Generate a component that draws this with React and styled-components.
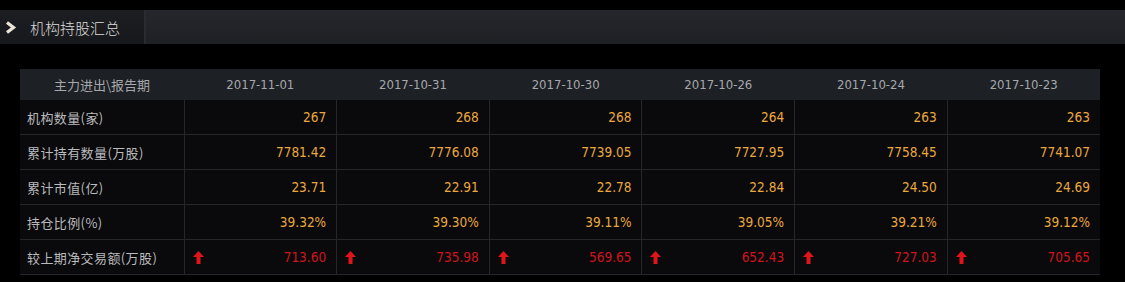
import React from "react";
import styled, { createGlobalStyle } from "styled-components";

const Global = createGlobalStyle`
  html, body {
    margin: 0;
    padding: 0;
    background: #000;
  }
  body {
    width: 1125px;
    height: 282px;
    overflow: hidden;
    font-family: "Noto Sans CJK SC", sans-serif;
  }
`;

const dates = ["2017-11-01", "2017-10-31", "2017-10-30", "2017-10-26", "2017-10-24", "2017-10-23"];

const rows = [
  { label: "机构数量(家)", values: ["267", "268", "268", "264", "263", "263"] },
  { label: "累计持有数量(万股)", values: ["7781.42", "7776.08", "7739.05", "7727.95", "7758.45", "7741.07"] },
  { label: "累计市值(亿)", values: ["23.71", "22.91", "22.78", "22.84", "24.50", "24.69"] },
  { label: "持仓比例(%)", values: ["39.32%", "39.30%", "39.11%", "39.05%", "39.21%", "39.12%"] },
  { label: "较上期净交易额(万股)", values: ["713.60", "735.98", "569.65", "652.43", "727.03", "705.65"], up: true },
];

const Page = styled.div`
  padding-top: 10px;
`;

const TitleBar = styled.div`
  display: flex;
  height: 34px;
  background: linear-gradient(to bottom, #232429, #1c1d21);
`;

const Tab = styled.div`
  display: flex;
  align-items: center;
  gap: 13px;
  width: 146px;
  padding-left: 5px;
  box-sizing: border-box;
  background: linear-gradient(to bottom, #1d1e22, #17181b);
  border-right: 2px solid #2a2b30;
  color: #dcdcdc;
  font-size: 15px;
  font-weight: 300;
`;

const TitleRest = styled.div`
  flex: 1;
  background: linear-gradient(to bottom, #26272c, #1f2024);
`;

const Wrap = styled.div`
  padding: 25px 25px 0 20px;
`;

const Table = styled.table`
  width: 1080px;
  border-collapse: collapse;
  table-layout: fixed;
  font-size: 13px;
`;

const Th = styled.th`
  height: 31px;
  padding: 0;
  background: #1d2025;
  color: #a6a8ab;
  font-weight: normal;
  font-family: ${(p) => (p.$cjk ? `"Noto Sans CJK SC", sans-serif` : `"DejaVu Sans Condensed", "DejaVu Sans", sans-serif`)};
  text-align: center;
  width: ${(p) => (p.$first ? "164px" : "auto")};
`;

const Td = styled.td`
  height: 34px;
  padding: 0 10px 0 8px;
  background: #0a0a0c;
  border: 1px solid #24262a;
  border-top: none;
  &:first-child {
    border-left: none;
  }
  &:last-child {
    border-right: none;
  }
`;

const Label = styled(Td)`
  color: #b9babd;
  font-size: 13px;
  letter-spacing: 0.4px;
  padding-left: 7px;
`;

const Cell = styled.div`
  display: flex;
  align-items: center;
  justify-content: space-between;
  font-family: "DejaVu Sans Condensed", "DejaVu Sans", sans-serif;
  font-size: 13.5px;
  color: ${(p) => (p.$up ? "#d0141c" : "#eba83c")};
`;

const Value = styled.span`
  margin-left: auto;
`;

const Chevron = () => (
  <svg width="12" height="13" viewBox="0 0 12 13">
    <path d="M2 1.5 L8.5 6.5 L2 11.5" fill="none" stroke="#ece6da" strokeWidth="3.2" strokeLinejoin="miter" />
  </svg>
);

const UpArrow = () => (
  <svg width="11" height="13" viewBox="0 0 11 13">
    <path d="M5.5 0 L11 6 L7.5 6 L7.5 13 L3.5 13 L3.5 6 L0 6 Z" fill="#e0141b" />
  </svg>
);

export default function App() {
  return (
    <Page>
      <Global />
      <TitleBar>
        <Tab>
          <Chevron />
          <span>机构持股汇总</span>
        </Tab>
        <TitleRest />
      </TitleBar>
      <Wrap>
        <Table>
          <thead>
            <tr>
              <Th $first $cjk>主力进出\报告期</Th>
              {dates.map((d) => (
                <Th key={d}>{d}</Th>
              ))}
            </tr>
          </thead>
          <tbody>
            {rows.map((r) => (
              <tr key={r.label}>
                <Label>{r.label}</Label>
                {r.values.map((v, i) => (
                  <Td key={i}>
                    <Cell $up={r.up}>
                      {r.up && <UpArrow />}
                      <Value>{v}</Value>
                    </Cell>
                  </Td>
                ))}
              </tr>
            ))}
          </tbody>
        </Table>
      </Wrap>
    </Page>
  );
}
